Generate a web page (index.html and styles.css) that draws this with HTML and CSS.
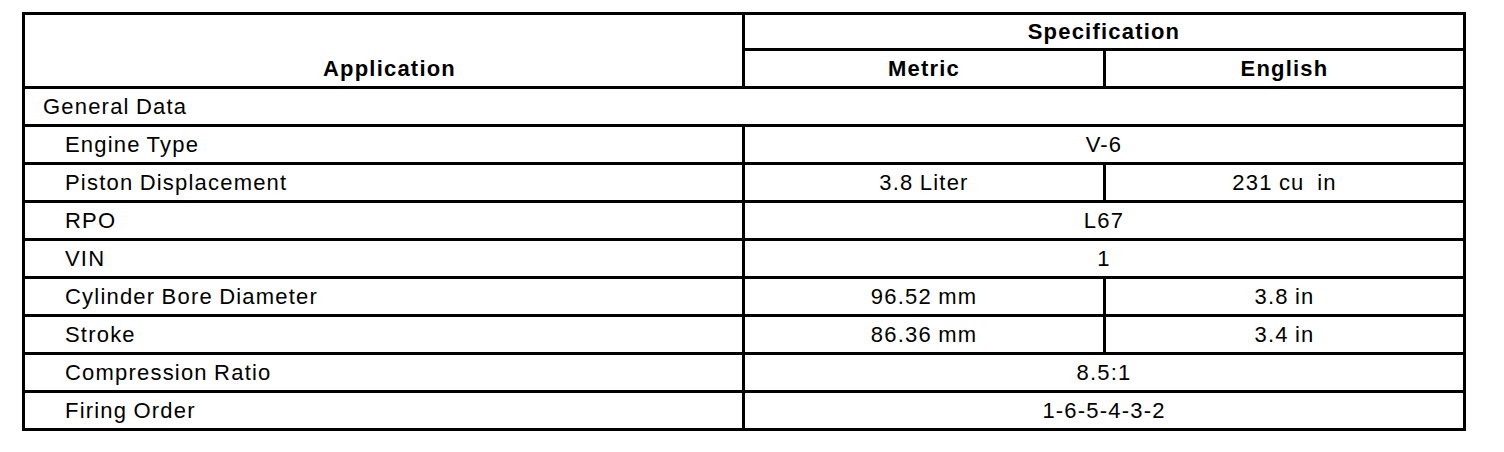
FILE: index.html
```html
<!DOCTYPE html>
<html lang="en">
<head>
    <meta charset="UTF-8">
    <title>General Data Specifications</title>
    <link rel="stylesheet" href="styles.css">
</head>
<body>
    <table class="spec-table">
        <colgroup>
            <col class="col-app">
            <col class="col-metric">
            <col class="col-english">
        </colgroup>
        <thead>
            <tr class="head-top">
                <th rowspan="2" class="app-head">Application</th>
                <th colspan="2">Specification</th>
            </tr>
            <tr class="head-sub">
                <th>Metric</th>
                <th>English</th>
            </tr>
        </thead>
        <tbody>
            <tr>
                <td colspan="3" class="group">General Data</td>
            </tr>
            <tr>
                <td class="item">Engine Type</td>
                <td colspan="2" class="val">V-6</td>
            </tr>
            <tr>
                <td class="item">Piston Displacement</td>
                <td class="val">3.8 Liter</td>
                <td class="val">231 cu&nbsp; in</td>
            </tr>
            <tr>
                <td class="item">RPO</td>
                <td colspan="2" class="val">L67</td>
            </tr>
            <tr>
                <td class="item">VIN</td>
                <td colspan="2" class="val">1</td>
            </tr>
            <tr>
                <td class="item">Cylinder Bore Diameter</td>
                <td class="val">96.52 mm</td>
                <td class="val">3.8 in</td>
            </tr>
            <tr>
                <td class="item">Stroke</td>
                <td class="val">86.36 mm</td>
                <td class="val">3.4 in</td>
            </tr>
            <tr>
                <td class="item">Compression Ratio</td>
                <td colspan="2" class="val">8.5:1</td>
            </tr>
            <tr>
                <td class="item">Firing Order</td>
                <td colspan="2" class="val">1-6-5-4-3-2</td>
            </tr>
        </tbody>
    </table>
</body>
</html>
```
FILE: styles.css
```css
body {
    background: #ffffff;
    color: #000000;
    font-family: 'Liberation Sans', Arial, sans-serif;
    margin: 0;
    padding: 12px 0 0 22px;
}
.spec-table {
    border-collapse: collapse;
    width: 1444px;
    table-layout: fixed;
    font-size: 22px;
    letter-spacing: 1.2px;
    word-spacing: -1px;
}
.col-app {
    width: 720px;
}
.col-metric {
    width: 361px;
}
.col-english {
    width: 360px;
}
.spec-table th,
.spec-table td {
    border: 3px solid #000;
    padding: 0;
    line-height: 24px;
}
.spec-table th {
    font-weight: bold;
    text-align: center;
}
.head-top {
    height: 36px;
}
.head-sub {
    height: 38px;
}
.app-head {
    vertical-align: bottom;
    padding: 0 0 5px 12px !important;
}
tbody tr {
    height: 38px;
}
.group {
    padding-left: 18px !important;
}
.item {
    padding-left: 40px !important;
}
.val {
    text-align: center;
}
```
